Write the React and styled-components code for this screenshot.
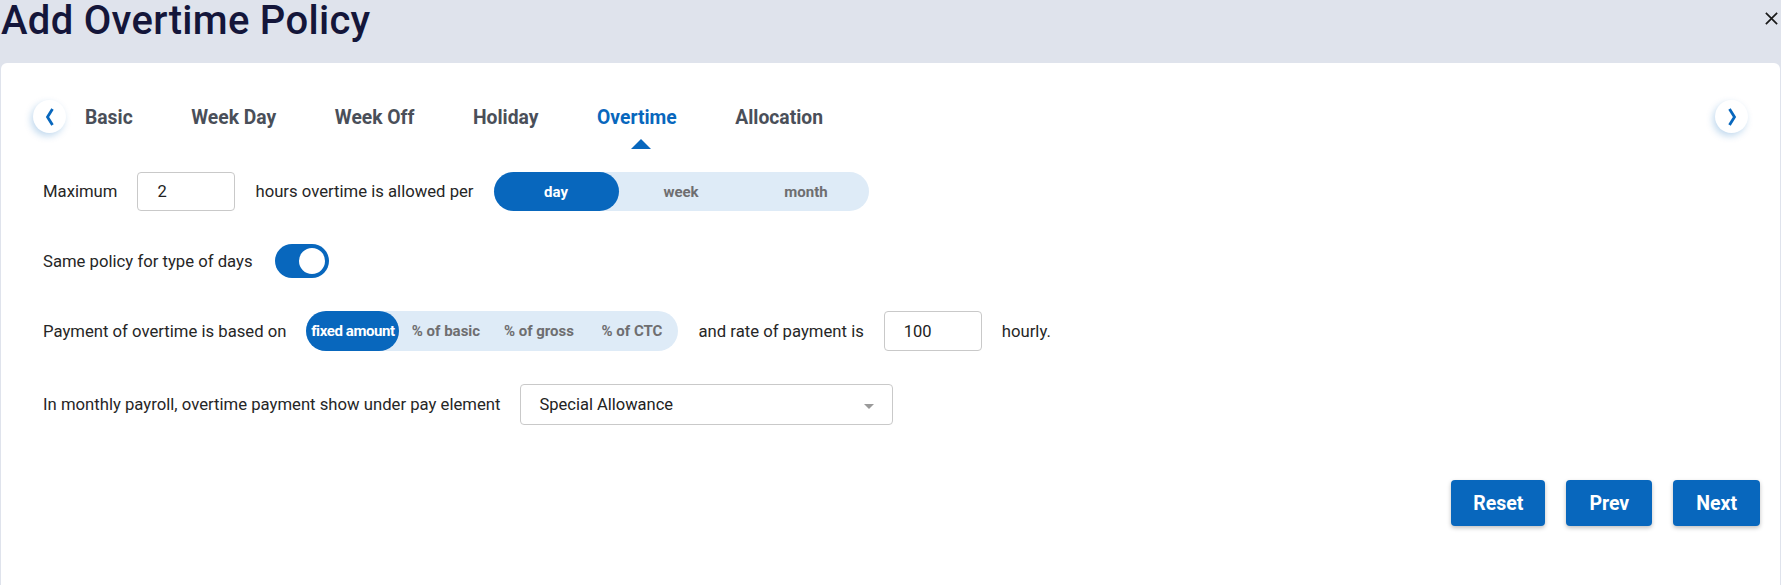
import React, { useState } from "react";
import styled, { createGlobalStyle } from "styled-components";

const BLUE = "#0867bd";

const GlobalStyle = createGlobalStyle`
  body {
    margin: 0;
    background: #dfe3ec;
    font-family: Roboto, "Liberation Sans", sans-serif;
  }
`;

const Page = styled.div`
  display: flex;
  flex-direction: column;
  min-height: 100vh;
`;

const Header = styled.div`
  height: 63px;
  display: flex;
  justify-content: space-between;
  align-items: flex-start;
  h1 {
    margin: 0 0 0 1px;
    font-size: 40px;
    line-height: 42px;
    font-weight: 500;
    color: #14163a;
    letter-spacing: 0.3px;
  }
`;

const CloseBtn = styled.button`
  border: none;
  background: transparent;
  padding: 0;
  margin: 11px 2px 0 0;
  color: #1a1a1a;
  display: flex;
`;

const Card = styled.div`
  flex: 1;
  margin: 0 1px;
  background: #fff;
  border-radius: 6px 6px 0 0;
  display: flex;
  flex-direction: column;
`;

const TabBar = styled.div`
  margin-top: 37px;
  padding: 0 32px;
  display: flex;
  align-items: center;
  height: 33px;
`;

const Arrow = styled.button`
  width: 33px;
  height: 33px;
  border-radius: 50%;
  border: none;
  padding: 0;
  background: #fff;
  color: ${BLUE};
  box-shadow: -2px 3px 7px rgba(8, 103, 189, 0.25);
  display: flex;
  align-items: center;
  justify-content: center;
`;

const Tabs = styled.div`
  flex: 1;
  display: flex;
  gap: 58.6px;
  margin-left: 19px;
  padding-top: 2px;
`;

const Tab = styled.div`
  position: relative;
  font-size: 19.3px;
  font-weight: 700;
  color: ${(p) => (p.$active ? BLUE : "#4a4f59")};
  ${(p) =>
    p.$active &&
    `
    &::after {
      content: "";
      position: absolute;
      left: 50%;
      top: 33px;
      margin-left: -6px;
      border-left: 10px solid transparent;
      border-right: 10px solid transparent;
      border-bottom: 10px solid ${BLUE};
    }
  `}
`;

const Form = styled.div`
  margin-top: 39px;
  padding: 0 42px;
  display: flex;
  flex-direction: column;
  gap: 33px;
`;

const Row = styled.div`
  display: flex;
  align-items: center;
  gap: 20px;
  height: ${(p) => p.$h || 39}px;
`;

const Label = styled.span`
  font-size: 16.7px;
  color: #262626;
`;

const Input = styled.input`
  box-sizing: border-box;
  width: 98px;
  height: ${(p) => p.$h || 39}px;
  border: 1px solid #c9c9c9;
  border-radius: 4px;
  padding: 0 0 0 19px;
  font-family: inherit;
  font-size: 16.5px;
  color: #222;
  outline: none;
`;

const Segmented = styled.div`
  display: flex;
  height: ${(p) => p.$h}px;
  background: #deebf7;
  border-radius: 999px;
`;

const Segment = styled.button`
  width: ${(p) => p.$w}px;
  border: none;
  padding: 0;
  border-radius: 999px;
  font-family: inherit;
  font-size: 15px;
  font-weight: 700;
  white-space: nowrap;
  overflow: visible;
  letter-spacing: ${(p) => (p.$tight ? "-0.4px" : "0")};
  background: ${(p) => (p.$active ? BLUE : "transparent")};
  color: ${(p) => (p.$active ? "#fff" : "#6e6e70")};
`;

const Toggle = styled.div`
  box-sizing: border-box;
  width: 54px;
  height: 34px;
  margin-left: 2px;
  border-radius: 17px;
  background: ${BLUE};
  padding: 2px;
  display: flex;
  justify-content: flex-end;
  &::after {
    content: "";
    width: 26px;
    height: 26px;
    border-radius: 50%;
    background: #fff;
    border: 2px solid ${BLUE};
  }
`;

const Select = styled.div`
  box-sizing: border-box;
  width: 373px;
  height: 41px;
  border: 1px solid #c9c9c9;
  border-radius: 4px;
  padding: 0 18px 0 18px;
  display: flex;
  align-items: center;
  justify-content: space-between;
  font-size: 16.5px;
  color: #222;
  &::after {
    content: "";
    border-left: 5px solid transparent;
    border-right: 5px solid transparent;
    border-top: 5px solid #9a9a9a;
    margin-top: 4px;
  }
`;

const Actions = styled.div`
  margin-top: 55px;
  padding: 0 20px;
  display: flex;
  justify-content: flex-end;
  gap: 21px;
`;

const Button = styled.button`
  height: 46px;
  padding: 0 ${(p) => p.$px || 23}px;
  border: none;
  border-radius: 4px;
  background: ${BLUE};
  color: #fff;
  font-family: inherit;
  font-size: 19.5px;
  font-weight: 700;
  box-shadow: 0 2px 4px rgba(0, 0, 0, 0.25);
`;

const Chevron = ({ dir }) => (
  <svg width="12" height="20" viewBox="0 0 12 20">
    <path
      d={dir === "left" ? "M8.5 2 L3.5 10 L8.5 18" : "M3.5 2 L8.5 10 L3.5 18"}
      fill="none"
      stroke="currentColor"
      strokeWidth="2.8"
    />
  </svg>
);

export default function App() {
  const [per, setPer] = useState("day");
  const [basis, setBasis] = useState("fixed amount");
  const tabs = ["Basic", "Week Day", "Week Off", "Holiday", "Overtime", "Allocation"];
  const basisOpts = ["fixed amount", "% of basic", "% of gross", "% of CTC"];

  return (
    <Page>
      <GlobalStyle />
      <Header>
        <h1>Add Overtime Policy</h1>
        <CloseBtn>
          <svg width="15" height="15" viewBox="0 0 16 16">
            <path d="M2 2 L14 14 M14 2 L2 14" stroke="currentColor" strokeWidth="1.8" />
          </svg>
        </CloseBtn>
      </Header>
      <Card>
        <TabBar>
          <Arrow>
            <Chevron dir="left" />
          </Arrow>
          <Tabs>
            {tabs.map((t) => (
              <Tab key={t} $active={t === "Overtime"}>
                {t}
              </Tab>
            ))}
          </Tabs>
          <Arrow>
            <Chevron dir="right" />
          </Arrow>
        </TabBar>

        <Form>
          <Row>
            <Label>Maximum</Label>
            <Input defaultValue="2" />
            <Label>hours overtime is allowed per</Label>
            <Segmented $h={39}>
              {["day", "week", "month"].map((o) => (
                <Segment key={o} $w={125} $active={per === o} onClick={() => setPer(o)}>
                  {o}
                </Segment>
              ))}
            </Segmented>
          </Row>
          <Row $h={34}>
            <Label>Same policy for type of days</Label>
            <Toggle />
          </Row>
          <Row $h={40}>
            <Label>Payment of overtime is based on</Label>
            <Segmented $h={40}>
              {basisOpts.map((o) => (
                <Segment
                  key={o}
                  $w={93}
                  $tight={o === "fixed amount"}
                  $active={basis === o}
                  onClick={() => setBasis(o)}
                >
                  {o}
                </Segment>
              ))}
            </Segmented>
            <Label>and rate of payment is</Label>
            <Input $h={40} defaultValue="100" />
            <Label>hourly.</Label>
          </Row>
          <Row $h={41}>
            <Label>In monthly payroll, overtime payment show under pay element</Label>
            <Select>Special Allowance</Select>
          </Row>
        </Form>

        <Actions>
          <Button $px={22}>Reset</Button>
          <Button>Prev</Button>
          <Button>Next</Button>
        </Actions>
      </Card>
    </Page>
  );
}
